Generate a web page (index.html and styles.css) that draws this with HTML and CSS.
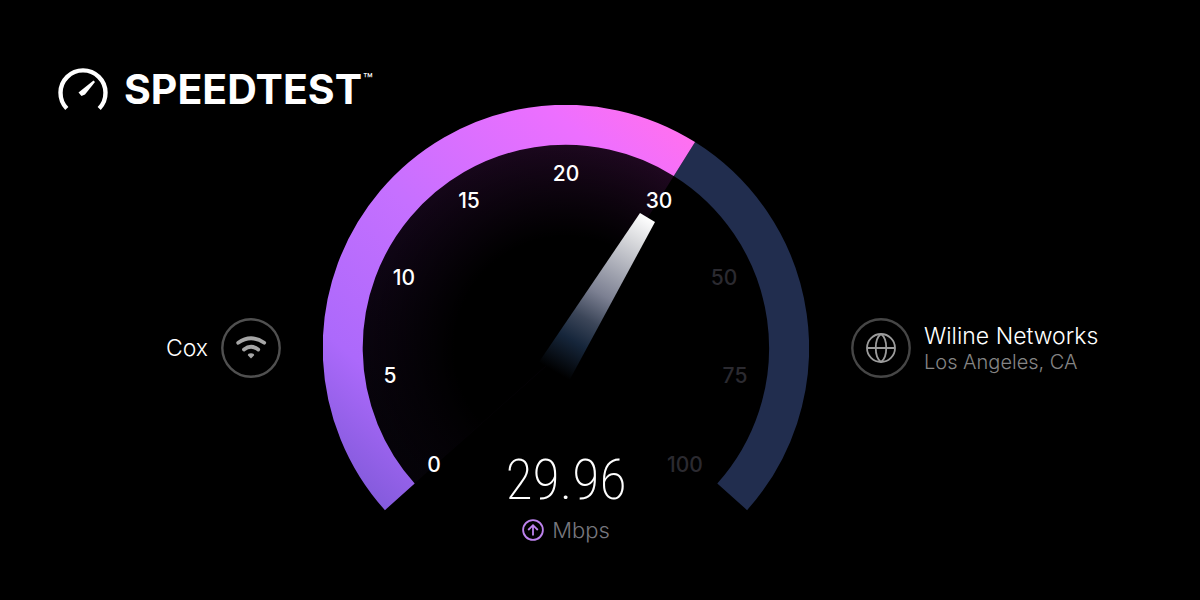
FILE: index.html
```html
<!DOCTYPE html>
<html lang="en">
<head>
<meta charset="utf-8">
<title>Speedtest</title>
<link rel="stylesheet" href="styles.css">
</head>
<body>
<header class="brand">
  <svg class="brand-mark" viewBox="0 0 50 44" aria-hidden="true">
    <path d="M8.800 41.500A22.500 22.500 0 1 1 41.200 41.500" fill="none" stroke="#fff" stroke-width="4.400"/>
    <path d="M35.500 13.500L37 15L27 27.500L23.500 29L20.500 25.500Z" fill="#fff"/>
  </svg>
  <h1 class="brand-name">SPEEDTEST<sup class="brand-tm">™</sup></h1>
</header>
<main class="test">
  <section class="host host-client">
    <p class="host-name">Cox</p>
    <svg class="host-icon" viewBox="0 0 60 60" aria-hidden="true">
      <circle cx="30" cy="30" r="28.700" fill="none" stroke="#505050" stroke-width="2.400"/>
      <g fill="none" stroke="#a6a6a6" stroke-width="3.800" stroke-linecap="round">
        <path d="M17.200 24.800Q30 15.800 43.200 24.800"/>
        <path d="M23 31.600Q30 26 37.200 31.600"/>
      </g>
      <path d="M30 40.600L26.800 37.200Q26.800 35.200 30 35.200T33.200 37.200Z" fill="#a6a6a6"/>
    </svg>
  </section>
  <section class="gauge">
    <svg class="dial" viewBox="0 0 486 486" role="img" aria-label="Upload speed gauge">
      <defs>
        <linearGradient id="progress" gradientUnits="userSpaceOnUse" x1="62" y1="405" x2="372" y2="38">
          <stop offset="0" stop-color="#845bdc"/>
          <stop offset=".2" stop-color="#ac69fb"/>
          <stop offset=".52" stop-color="#c670ff"/>
          <stop offset=".86" stop-color="#ed6fff"/>
          <stop offset="1" stop-color="#ff70f0"/>
        </linearGradient>
        <linearGradient id="needle" gradientUnits="userSpaceOnUse" x1="325" y1="112" x2="234" y2="268">
          <stop offset="0" stop-color="#fff"/>
          <stop offset=".15" stop-color="#d9dadd"/>
          <stop offset=".5" stop-color="#7c8092"/>
          <stop offset=".66" stop-color="#3c4659"/>
          <stop offset=".8" stop-color="#16263b"/>
          <stop offset="1" stop-color="#000"/>
        </linearGradient>
        <radialGradient id="glow" gradientUnits="userSpaceOnUse" cx="243" cy="243" r="203">
          <stop offset=".55" stop-color="#000"/>
          <stop offset="1" stop-color="#000" stop-opacity="0"/>
        </radialGradient>
        <linearGradient id="tint" gradientUnits="userSpaceOnUse" x1="92" y1="378" x2="351" y2="72">
          <stop offset="0" stop-color="#050308"/>
          <stop offset=".4" stop-color="#0f0515"/>
          <stop offset="1" stop-color="#1f0820"/>
        </linearGradient>
      </defs>
      <path d="M243 243L90.900 379.100A204 204 0 0 1 351.300 70.100Z" fill="url(#tint)"/>
      <path d="M243 243L90.900 379.100A204 204 0 0 1 351.300 70.100Z" fill="url(#glow)"/>
      <g fill="none" stroke-width="40">
        <path d="M361.400 54A223 223 0 0 1 409.200 391.800" stroke="#212d4e"/>
        <path d="M76.800 391.800A223 223 0 0 1 361.400 54" stroke="url(#progress)"/>
      </g>
      <path d="M317 108L332 117L246 276L216 257Z" fill="url(#needle)"/>
      <g class="tick">
        <text x="111" y="367">0</text>
        <text x="67" y="278">5</text>
        <text x="81" y="180">10</text>
        <text x="146" y="103">15</text>
        <text x="243" y="76">20</text>
        <text x="336" y="103">30</text>
      </g>
      <g class="tick tick-off">
        <text x="401" y="180">50</text>
        <text x="412" y="278">75</text>
        <text x="362" y="367">100</text>
      </g>
    </svg>
    <div class="reading">
      <div class="reading-value">29.96</div>
      <div class="reading-unit">
        <svg class="reading-icon" viewBox="0 0 22 22" aria-hidden="true">
          <g fill="none" stroke="#bd82ee" stroke-width="1.800">
            <circle cx="11" cy="11" r="9.900"/>
            <path d="M11 16.500V6.200M6.200 11L11 6.200L15.800 11"/>
          </g>
        </svg>
        <span>Mbps</span>
      </div>
    </div>
  </section>
  <section class="host host-server">
    <svg class="host-icon" viewBox="0 0 60 60" aria-hidden="true">
      <circle cx="30" cy="30" r="28.700" fill="none" stroke="#464646" stroke-width="2.400"/>
      <g fill="none" stroke="#9c9c9c" stroke-width="1.800">
        <circle cx="30" cy="30" r="14"/>
        <path d="M16 30H44M30 16C23 21 23 39 30 44C37 39 37 21 30 16"/>
      </g>
    </svg>
    <div>
      <p class="host-name">Wiline Networks</p>
      <p class="host-place">Los Angeles, CA</p>
    </div>
  </section>
</main>
</body>
</html>
```
FILE: styles.css
```css
* {
  box-sizing: border-box;
}

body {
  margin: 0;
  padding: 67px 68px 0 0;
  background: #000;
  color: #fff;
  font-family: Inter, "Open Sans", sans-serif;
}

h1,
p {
  margin: 0;
}

.brand {
  display: flex;
  align-items: center;
  gap: 16px;
  margin: 0 0 -6px 58px;
}

.brand-mark {
  width: 50px;
  height: 44px;
}

.brand-name {
  display: flex;
  font-size: 41px;
  font-weight: 700;
  line-height: 44px;
}

.brand-tm {
  margin-left: 1px;
  font-size: 16px;
  font-weight: 400;
  line-height: 24px;
}

.test {
  display: grid;
  grid-template-columns: 1fr minmax(0, 486px) 1fr;
  align-items: center;
  column-gap: 42px;
}

.host {
  display: flex;
  align-items: center;
  gap: 13px;
  white-space: nowrap;
}

.host-client {
  justify-content: flex-end;
}

.host-icon {
  flex: none;
  width: 60px;
  height: 60px;
}

.host-name {
  font-size: 23px;
  font-weight: 300;
  line-height: 28px;
}

.host-place {
  color: #858585;
  font-size: 20px;
  font-weight: 300;
  line-height: 24px;
}

.gauge {
  display: grid;
}

.dial,
.reading {
  grid-area: 1 / 1;
}

.dial {
  width: 100%;
}

.tick {
  fill: #fff;
  font-size: 21px;
  font-weight: 500;
  text-anchor: middle;
}

.tick-off {
  fill: #2b2a30;
}

.reading {
  align-self: end;
  justify-self: center;
  padding-bottom: 47px;
  text-align: center;
}

.reading-value {
  font-family: "Roboto Condensed", "Open Sans Condensed", "Liberation Sans Narrow", sans-serif;
  font-size: 56px;
  font-weight: 200;
  line-height: 72px;
}

.reading-unit {
  display: flex;
  align-items: center;
  justify-content: center;
  gap: 8px;
  color: #77777e;
  font-size: 22px;
  font-weight: 300;
  line-height: 28px;
}

.reading-icon {
  width: 22px;
  height: 22px;
}
```
